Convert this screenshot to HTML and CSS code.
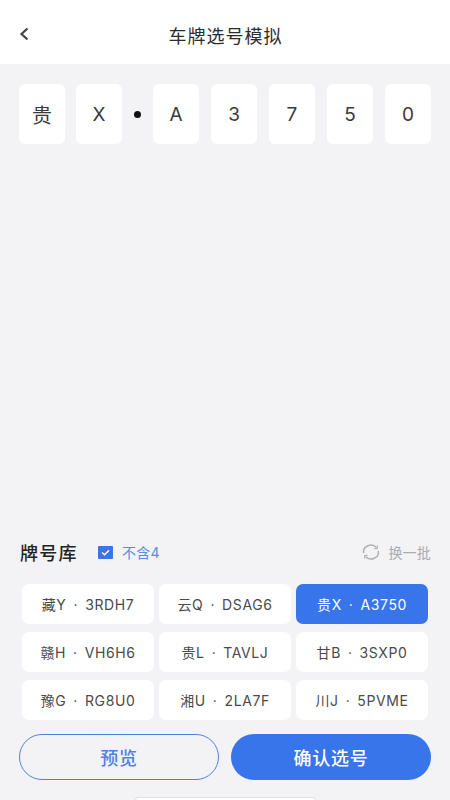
FILE: index.html
```html
<!DOCTYPE html>
<html lang="zh">
<head>
<meta charset="utf-8">
<title>车牌选号模拟</title>
<link rel="stylesheet" href="styles.css">
</head>
<body>
<div class="app">
  <header class="top">
    <svg class="back" width="12" height="16" viewBox="0 0 12 16"><path d="M9.5 2.5 3.5 8l6 5.5" fill="none" stroke="#444" stroke-width="2.2"/></svg>
    <h1>车牌选号模拟</h1>
  </header>
  <section class="plate">
    <div class="cell first">贵</div>
    <div class="cell">X</div>
    <div class="dot"></div>
    <div class="cell">A</div>
    <div class="cell">3</div>
    <div class="cell">7</div>
    <div class="cell">5</div>
    <div class="cell">0</div>
  </section>
  <section class="lib">
    <div class="lib-head">
      <h2>牌号库</h2>
      <span class="check"><svg width="15" height="13" viewBox="0 0 15 13"><rect width="15" height="13" rx="1" fill="#3874ea"/><path d="M4 6.5 6.6 8.8 11 4.2" fill="none" stroke="#fff" stroke-width="1.5"/></svg></span>
      <span class="no4">不含4</span>
      <span class="swap">
        <svg width="18" height="16" viewBox="0 0 18 16"><path d="M1.8 9A7.2 6.6 0 0 1 14.5 3.6M16.2 7A7.2 6.6 0 0 1 3.5 12.4" fill="none" stroke="#aeb0b4" stroke-width="1.5"/><path d="M15.4 1.5v3.2h-3.2M2.6 14.5v-3.2h3.2" fill="none" stroke="#aeb0b4" stroke-width="1"/></svg>
        <span>换一批</span>
      </span>
    </div>
    <div class="grid">
      <div class="opt">藏Y · 3RDH7</div>
      <div class="opt">云Q · DSAG6</div>
      <div class="opt on">贵X · A3750</div>
      <div class="opt">赣H · VH6H6</div>
      <div class="opt">贵L · TAVLJ</div>
      <div class="opt">甘B · 3SXP0</div>
      <div class="opt">豫G · RG8U0</div>
      <div class="opt">湘U · 2LA7F</div>
      <div class="opt">川J · 5PVME</div>
    </div>
  </section>
  <div class="actions">
    <button class="btn ghost">预览</button>
    <button class="btn solid">确认选号</button>
  </div>
  <div class="home"></div>
</div>
</body>
</html>
```
FILE: styles.css
```css
* { box-sizing: border-box; margin: 0; padding: 0; }
html, body { width: 450px; height: 800px; overflow: hidden; }
body { font-family: "Inter", "Noto Sans CJK SC", sans-serif; background: #f3f3f6; color: #333; }
.app { height: 800px; display: flex; flex-direction: column; overflow: hidden; }
.top { position: relative; flex: none; height: 64px; background: #fff; display: flex; align-items: center; justify-content: center; padding-top: 5px; }
.back { position: absolute; left: 18px; top: 26px; }
.top h1 { font-size: 18px; font-weight: 400; letter-spacing: 1px; color: #2c2c2c; margin-right: -1px; }
.plate { flex: none; display: flex; align-items: center; padding: 20px 19px 0; height: 80px; }
.cell { width: 46px; height: 60px; margin-right: 12px; background: #fff; border-radius: 6px; display: flex; align-items: center; justify-content: center; font-size: 19px; color: #3a3a3a; }
.cell.first { margin-right: 11px; font-size: 20px; }
.cell:last-child { margin-right: 0; }
.cell:nth-child(2) { margin-right: 0; }
.dot { width: 31px; display: flex; justify-content: center; }
.dot::before { content: ""; width: 7px; height: 7px; border-radius: 50%; background: #111; }
.lib { flex: none; margin-top: 389px; }
.lib-head { display: flex; align-items: center; padding: 0 19px 0 20px; height: 38px; }
.lib-head h2 { font-size: 18px; font-weight: 500; letter-spacing: 1.2px; color: #222; width: 78px; }
.check { display: flex; width: 24px; }
.no4 { font-size: 14px; letter-spacing: .3px; color: #5a8ae6; }
.swap { margin-left: auto; display: flex; align-items: center; gap: 8px; font-size: 14px; letter-spacing: .2px; color: #a9abaf; }
.grid { display: grid; grid-template-columns: repeat(3, 132px); gap: 8.5px 5px; padding: 13px 22px 0; }
.opt { height: 39.5px; background: #fff; border-radius: 7px; display: flex; align-items: center; justify-content: center; font-size: 14px; letter-spacing: .6px; word-spacing: 2.5px; color: #4a4a4a; white-space: pre; }
.opt.on { background: #3874ea; color: #fff; }
.actions { flex: none; display: grid; grid-template-columns: 200px 200px; gap: 12px; padding: 14.5px 19px 0; }
.btn { height: 46px; border-radius: 23px; font: 500 18px "Noto Sans CJK SC", sans-serif; letter-spacing: .8px; }
.ghost { background: transparent; border: 1.5px solid #5081e0; color: #4d80e4; }
.solid { background: #3874ea; border: 0; color: #fff; }
.home { flex: none; width: 181px; height: 6px; margin: 17px auto 0; background: #fff; border: 1px solid #dedfe2; border-radius: 3px; }
```
